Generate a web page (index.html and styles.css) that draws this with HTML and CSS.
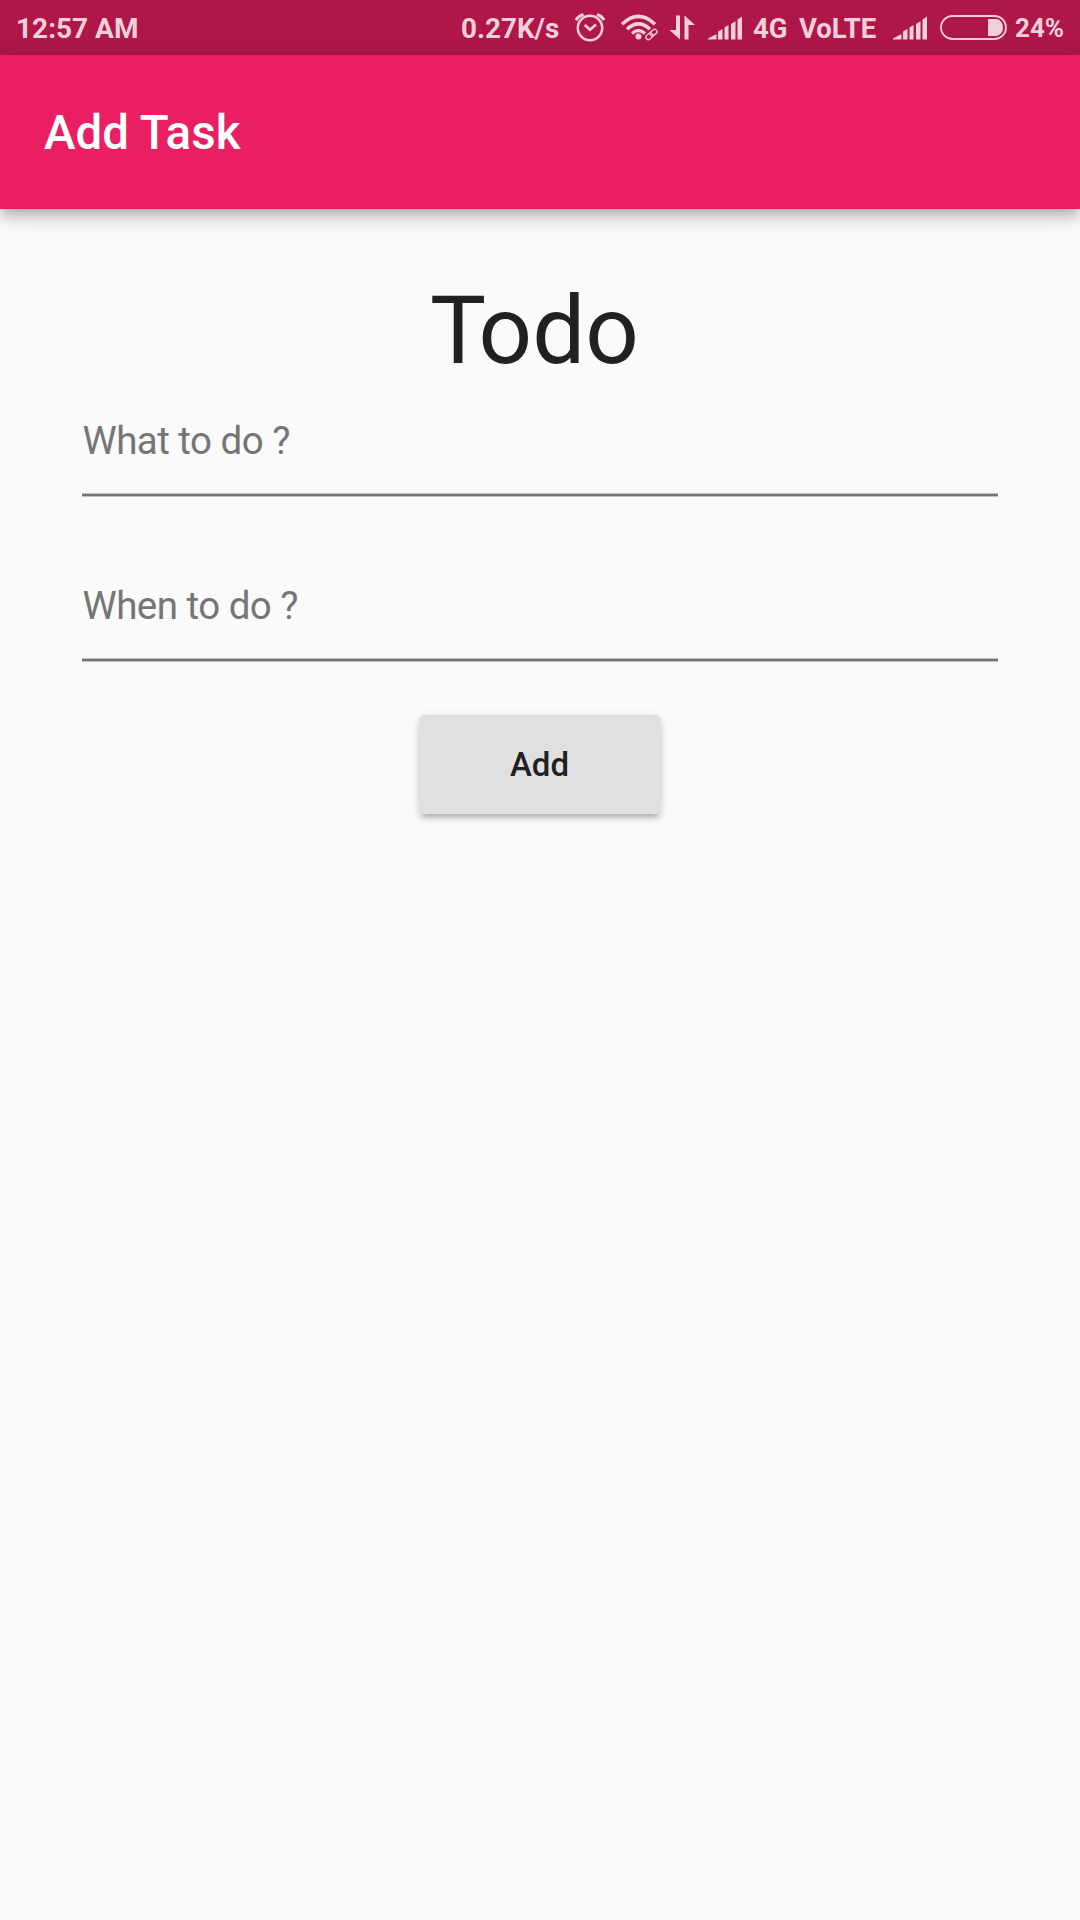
FILE: index.html
```html
<!DOCTYPE html>
<html lang="en">
<head>
<meta charset="utf-8">
<title>Add Task</title>
<link rel="stylesheet" href="styles.css">
</head>
<body>
<div class="status-bar">
  <span class="clock">12:57 AM</span>
  <span class="speed">0.27K/s</span>
  <svg class="icon alarm" viewBox="575 10 32 34" width="32" height="34">
    <g fill="none" stroke="currentColor">
      <circle cx="590" cy="28" r="12.2" stroke-width="2.5"/>
      <path d="M584.8 25l5.2 4.8 6-5.2" stroke-width="2.7"/>
      <path d="M576 20.2q2.2-4 7.5-5.7M597 14.5q5.200 1.700 7 5.700" stroke-width="3.2"/>
    </g>
  </svg>
  <svg class="icon wifi" viewBox="620 10 40 34" width="40" height="34">
    <g fill="none" stroke="currentColor">
      <path d="M622 24.200Q638.500 8.500 655 24.200" stroke-width="3.500"/>
      <path d="M627 29.300Q638.500 18.500 650 29.300" stroke-width="3.500"/>
      <path d="M632 33.500Q638.500 27.500 645 33.500" stroke-width="3.200"/>
      <g stroke-width="1.300" transform="rotate(-42 651.500 34.500)">
        <rect x="645" y="32" width="7.500" height="4.800" rx="2.400"/>
        <rect x="650.500" y="32" width="7.500" height="4.800" rx="2.400"/>
      </g>
    </g>
    <circle cx="638.500" cy="36.500" r="3" fill="currentColor"/>
  </svg>
  <svg class="icon transfer" viewBox="669 10 27 34" width="27" height="34">
    <path fill="currentColor" d="M676 15.500h4V39.500L669.500 30h6.500zM684.500 39.500h4V25h6.500L684.500 15.500z"/>
  </svg>
  <svg class="icon signal-one" viewBox="0 0 35 34" width="35" height="34">
    <path fill="currentColor" d="M0 29.500V28.500L8.500 24v5.500zM10 29.500v-8l4.500-2.500v10.500zM16.500 29.500V17.500l4-2.500v14.500zM23 29.500V14l4.500-2.800v18.300zM29.500 29.500V9.500L34 6.500v23z"/>
  </svg>
  <span class="network">4G</span>
  <span class="volte">VoLTE</span>
  <svg class="icon signal-two" viewBox="0 0 35 34" width="35" height="34">
    <path fill="currentColor" d="M0 29.500V28.500L8.500 24v5.500zM10 29.500v-8l4.500-2.500v10.500zM16.500 29.500V17.500l4-2.500v14.500zM23 29.500V14l4.500-2.800v18.300zM29.500 29.500V9.500L34 6.500v23z"/>
  </svg>
  <svg class="icon battery" viewBox="940 10 68 34" width="68" height="34">
    <rect x="941" y="16" width="65" height="23" rx="11.500" fill="none" stroke="currentColor" stroke-width="1.800"/>
    <path fill="currentColor" d="M988 19h8a7 8.500 0 0 1 0 17h-8z"/>
  </svg>
  <span class="percent">24%</span>
</div>
<header class="app-bar">Add Task</header>
<main class="form">
  <h1 class="heading"><span class="initial">T</span>odo</h1>
  <div class="field">What to do ?</div>
  <div class="field">When to do ?</div>
  <button class="add-button" type="button">Add</button>
</main>
</body>
</html>
```
FILE: styles.css
```css
* { box-sizing: border-box; }

body {
  margin: 0;
  height: 1920px;
  background: #fafafa;
  color: #212121;
  font-family: Roboto, sans-serif;
  display: flex;
  flex-direction: column;
}

.status-bar {
  display: flex;
  height: 55px;
  padding-left: 16px;
  background: #ae1748;
  color: #f2d0db;
  font-size: 27.5px;
  font-weight: 700;
  line-height: 58px;
  white-space: nowrap;
}

.status-bar span,
.icon { flex: none; }

.icon { margin-top: 10px; }

.clock { width: 445px; font-size: 28px; }
.speed { width: 114px; font-size: 27.8px; }
.wifi { margin-left: 13px; }
.transfer { margin-left: 9px; }
.signal-one { margin-left: 12px; }
.network { width: 46px; margin-left: 10px; }
.volte { width: 94px; }
.battery { margin-left: 12px; }
.percent { margin-left: 7px; font-size: 26px; line-height: 56px; }

.app-bar {
  height: 154px;
  padding-left: 44px;
  background: #e91e63;
  color: #fff;
  font-size: 47.5px;
  font-weight: 500;
  line-height: 157px;
  box-shadow: 0 5px 11px -3px rgba(0, 0, 0, .2), 0 11px 14px rgba(0, 0, 0, .14), 0 3px 27px rgba(0, 0, 0, .06);
}

.form {
  display: flex;
  flex-direction: column;
  align-items: center;
  padding: 67px 82px 0;
}

.heading {
  width: 220px;
  margin: 0;
  font-size: 94px;
  font-weight: 400;
  line-height: 110px;
}

/* Tightens the gap between the T and the o that follows */
.initial { letter-spacing: -7.5px; }

.field {
  width: 916px;
  height: 82px;
  margin-top: 29px;
  padding-left: 0.5px;
  color: #757575;
  font-size: 38.5px;
  letter-spacing: -0.52px;
  line-height: 52px;
  background: linear-gradient(#c1c1c1 1px, #757575 1px, #757575 3px, #c1c1c1 3px) bottom / 100% 4px no-repeat;
}

.field + .field { margin-top: 83px; }

.add-button {
  width: 242px;
  height: 99px;
  margin-top: 53px;
  padding: 0 1px 0 0;
  border: 0;
  border-radius: 5.5px;
  background: #e0e0e0;
  color: #212121;
  font: 500 33px/99px Roboto, sans-serif;
  box-shadow: 0 6px 4px -4px rgba(0, 0, 0, .18), 0 5px 6px rgba(0, 0, 0, .13), 0 2px 12px rgba(0, 0, 0, .08);
}
```
